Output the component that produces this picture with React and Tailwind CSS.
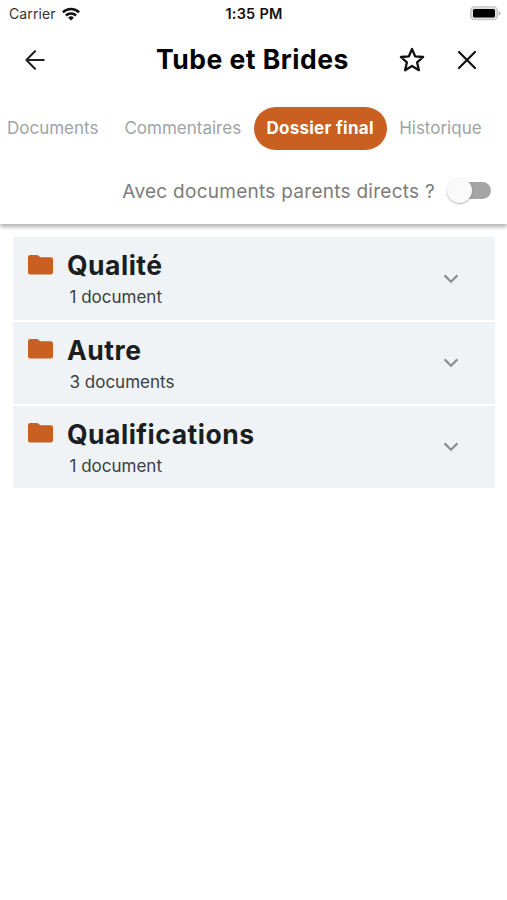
import React, { useState } from 'react';

const TABS = ['Documents', 'Commentaires', 'Dossier final', 'Historique'];

const FOLDERS = [
  { name: 'Qualité', count: 1 },
  { name: 'Autre', count: 3 },
  { name: 'Qualifications', count: 1 },
];

const WifiIcon = () => (
  <svg className="w-[18px] h-[14px]" viewBox="0 0 18 14" fill="none" stroke="#111" strokeWidth="2.5">
    <path d="M0.9 5.4a11.5 11.5 0 0 1 16.2 0" />
    <path d="M3.9 8.5a7.2 7.2 0 0 1 10.2 0" />
    <path d="M9 13.6 6.1 10.7a4.1 4.1 0 0 1 5.8 0Z" fill="#111" stroke="none" />
  </svg>
);

const BatteryIcon = () => (
  <svg className="w-[31px] h-[15px]" viewBox="0 0 31 15">
    <rect x="0.75" y="0.75" width="26.5" height="13" rx="3.8" fill="#e0e0e0" stroke="#c0c0c0" strokeWidth="1.2" />
    <rect x="3" y="3" width="22" height="8.6" rx="1.6" fill="#000" />
    <path d="M28.6 5v4.6q2-.8 2-2.3t-2-2.3Z" fill="#b5b5b5" />
  </svg>
);

const BackIcon = () => (
  <svg className="w-5 h-5" viewBox="0 0 20 20" fill="none" stroke="#222" strokeWidth="2" strokeLinecap="round" strokeLinejoin="round">
    <path d="M10 1.2 1.4 10l8.6 8.8M1.6 10h17.2" />
  </svg>
);

const StarIcon = () => (
  <svg className="w-[26px] h-[26px]" viewBox="0 0 26 26" fill="none" stroke="#111" strokeWidth="2.3" strokeLinejoin="round">
    <path d="m13 2 3.1 7.3 8 .7-6 5.3 1.8 7.9-6.9-4.2-6.9 4.2 1.8-7.9-6-5.3 8-.7Z" />
  </svg>
);

const CloseIcon = () => (
  <svg className="w-5 h-5" viewBox="0 0 20 20" fill="none" stroke="#111" strokeWidth="2.2" strokeLinecap="round">
    <path d="m2 2 16 16M18 2 2 18" />
  </svg>
);

const FolderIcon = () => (
  <svg className="w-[25px] h-5" viewBox="0 0 25 20" fill="#c95f20">
    <path d="M2.2 0H8.8Q9.8 0 10.4.6L12.2 2.3H22.8Q25 2.3 25 4.5V17.3Q25 19.5 22.8 19.5H2.2Q0 19.5 0 17.3V2.2Q0 0 2.2 0Z" />
  </svg>
);

const ChevronIcon = () => (
  <svg className="w-4 h-[10px]" viewBox="0 0 16 10" fill="none" stroke="#8d9194" strokeWidth="2.3">
    <path d="m1.6 1.4 6.4 6.3 6.4-6.3" />
  </svg>
);

const FolderRow = ({ name, count }) => (
  <button className="flex items-center w-full h-[82.7px] bg-[#eff3f6] pl-[14.5px] pr-[36.5px] text-left">
    <div className="self-start pt-[17.5px]">
      <FolderIcon />
    </div>
    <div className="flex-1 self-start pl-[14.5px] pt-2">
      <p className="text-[26.5px] leading-[40px] font-bold tracking-[0.5px] text-[#1b1e21]">{name}</p>
      <p className="pl-[2.5px] text-[17px] leading-6 text-[#3b3e41]">
        {count} {count > 1 ? 'documents' : 'document'}
      </p>
    </div>
    <ChevronIcon />
  </button>
);

export default function App() {
  const [tab, setTab] = useState('Dossier final');
  const [parents, setParents] = useState(false);

  return (
    <div className="min-h-screen w-full overflow-hidden bg-white font-['Inter',sans-serif]">
      <header className="h-[224px] bg-white shadow-[0_3px_4px_rgba(0,0,0,0.3)]">
        {/* Status bar */}
        <div className="grid grid-cols-3 items-center h-[27px] pl-[9px] pr-[6px] text-[14px] text-[#111]">
          <div className="flex items-center gap-[6px]">
            <span className="text-[#333] tracking-[0.1px]">Carrier</span>
            <WifiIcon />
          </div>
          <span className="text-center text-[14.5px] font-semibold tracking-[0.25px] -ml-[2px]">1:35 PM</span>
          <div className="flex justify-end">
            <BatteryIcon />
          </div>
        </div>

        {/* Title bar */}
        <div className="flex items-center h-[65px] pl-[25px] pr-[30.5px]">
          <button aria-label="Retour"><BackIcon /></button>
          <h1 className="flex-1 pl-[111px] text-[26.5px] font-bold tracking-[0.5px] text-black whitespace-nowrap">Tube et Brides</h1>
          <div className="flex items-center gap-8">
            <button aria-label="Favori"><StarIcon /></button>
            <button aria-label="Fermer"><CloseIcon /></button>
          </div>
        </div>

        {/* Tabs */}
        <nav className="flex items-center h-[73px] pl-[7px] whitespace-nowrap">
          {TABS.map(t => (
            <button
              key={t}
              onClick={() => setTab(t)}
              className={t === tab
                ? 'h-[43px] w-[133px] mx-[12.5px] rounded-full bg-[#c95f20] text-[17px] font-bold tracking-[0.25px] text-white'
                : 'text-[17px] text-[#a0a3a6] first:mr-[26px]'}
            >
              {t}
            </button>
          ))}
        </nav>

        {/* Parent documents switch */}
        <div className="flex items-center justify-end h-[51px] pr-4">
          <span className="pt-[3px] text-[19px] tracking-[0.27px] text-[#7c7c7c] whitespace-nowrap">Avec documents parents directs ?</span>
          <button
            role="switch"
            aria-checked={parents}
            aria-label="Avec documents parents directs ?"
            onClick={() => setParents(!parents)}
            className={`flex items-center ml-[14px] w-[42px] h-[17px] rounded-full ${parents ? 'justify-end bg-[#e0a27d]' : 'bg-[#a5a5a5]'}`}
          >
            <span className="-ml-[2px] size-[25px] shrink-0 rounded-full bg-[#fafafa] shadow-[0_1px_2px_rgba(0,0,0,0.3)]" />
          </button>
        </div>
      </header>

      <main className="flex flex-col gap-[1.5px] pt-[13.4px] pl-[13px] pr-3">
        {FOLDERS.map(f => (
          <FolderRow key={f.name} name={f.name} count={f.count} />
        ))}
      </main>
    </div>
  );
}
